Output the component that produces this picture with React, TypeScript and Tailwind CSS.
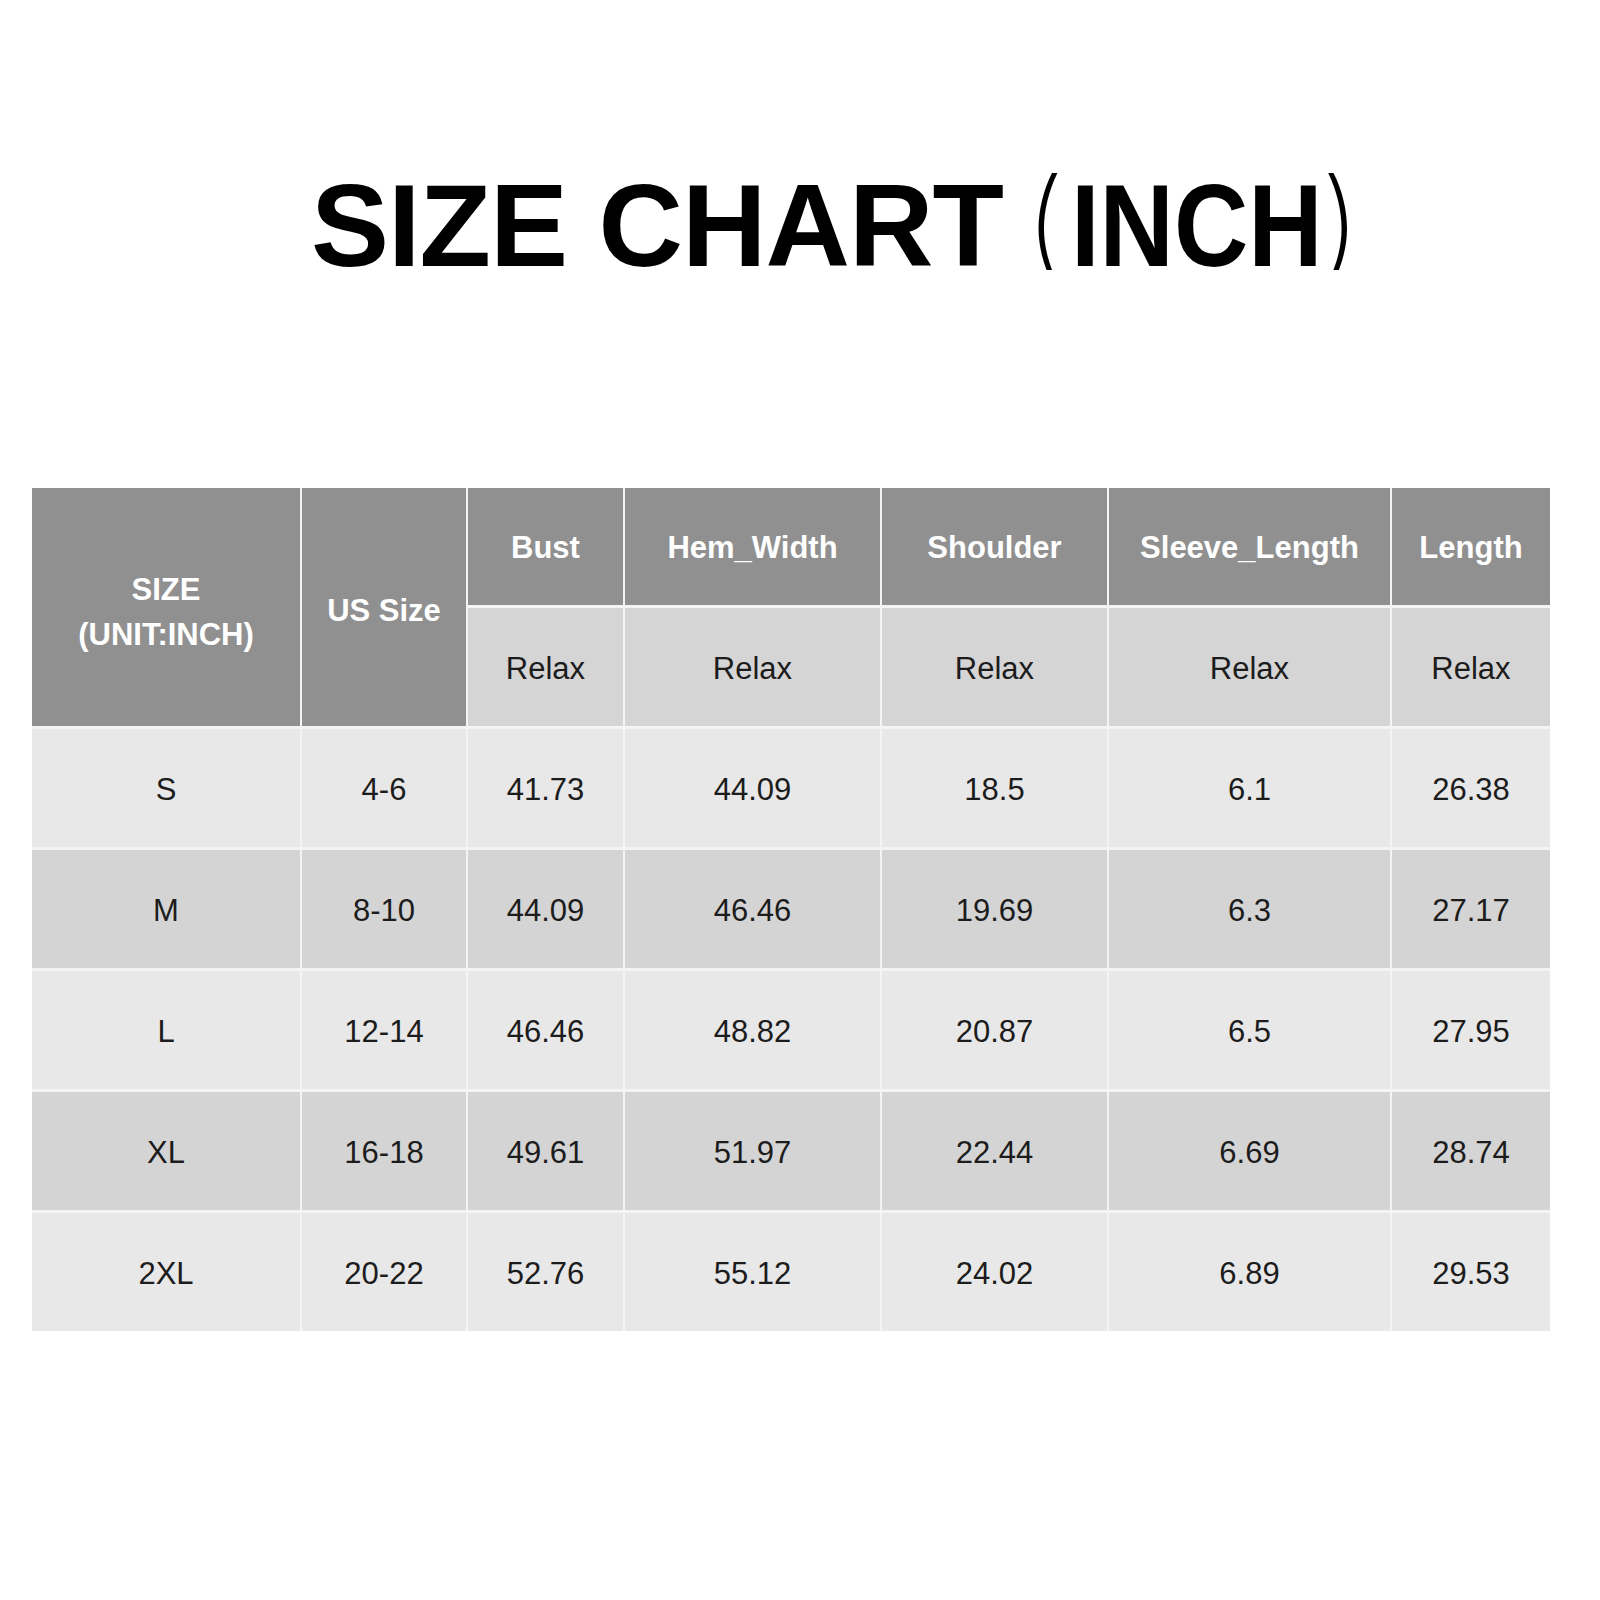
import React from "react";

const cols = ["Bust", "Hem_Width", "Shoulder", "Sleeve_Length", "Length"];

const rows: string[][] = [
  ["S", "4-6", "41.73", "44.09", "18.5", "6.1", "26.38"],
  ["M", "8-10", "44.09", "46.46", "19.69", "6.3", "27.17"],
  ["L", "12-14", "46.46", "48.82", "20.87", "6.5", "27.95"],
  ["XL", "16-18", "49.61", "51.97", "22.44", "6.69", "28.74"],
  ["2XL", "20-22", "52.76", "55.12", "24.02", "6.89", "29.53"],
];

export default function App() {
  return (
    <div className="w-[1600px] h-[1600px] bg-white font-['Liberation_Sans',Arial,sans-serif]">
      <div className="h-[270px] overflow-hidden pt-[163px] pl-[311px]">
        <div className="flex items-baseline leading-none text-black">
          <span className="text-[117px] font-bold tracking-[-1px]">SIZE CHART</span>
          <span className="ml-[22px] text-[120px] font-extralight font-['Inter','Liberation_Sans',sans-serif]">(</span>
          <span className="ml-[6px] inline-block origin-left scale-x-[0.88] mr-[-34px] text-[117px] font-bold">INCH</span>
          <span className="ml-[-2px] text-[120px] font-extralight font-['Inter','Liberation_Sans',sans-serif]">)</span>
        </div>
      </div>

      <div className="ml-[32px] mt-[218px] w-[1518px] grid grid-cols-[268px_164px_155px_255px_225px_281px_158px] grid-rows-[117px_118px_118px_118px_118px_118px_118px] gap-x-[2px] gap-y-[3px] bg-[#f4f4f4]">
        <div className="row-span-2 bg-[#909090] flex flex-col items-center justify-center text-white font-bold text-[31px] leading-[45px] pt-[10px]">
          <span>SIZE</span>
          <span>(UNIT:INCH)</span>
        </div>
        <div className="row-span-2 bg-[#909090] flex items-center justify-center text-white font-bold text-[31px] pt-[8px]">
          US Size
        </div>
        {cols.map((c) => (
          <div key={c} className="bg-[#909090] flex items-center justify-center text-white font-bold text-[31px] pt-[4px]">
            {c}
          </div>
        ))}
        {cols.map((c) => (
          <div key={c + "r"} className="bg-[#d5d5d5] flex items-center justify-center text-[#1c1c1c] text-[31px] pt-[4px]">
            Relax
          </div>
        ))}
        {rows.map((r, i) =>
          r.map((v, j) => (
            <div
              key={i + "-" + j}
              className={
                (i % 2 === 0 ? "bg-[#e8e8e8]" : "bg-[#d4d4d4]") +
                " flex items-center justify-center text-[#1c1c1c] text-[31px] pt-[4px]"
              }
            >
              {v}
            </div>
          ))
        )}
      </div>
    </div>
  );
}
